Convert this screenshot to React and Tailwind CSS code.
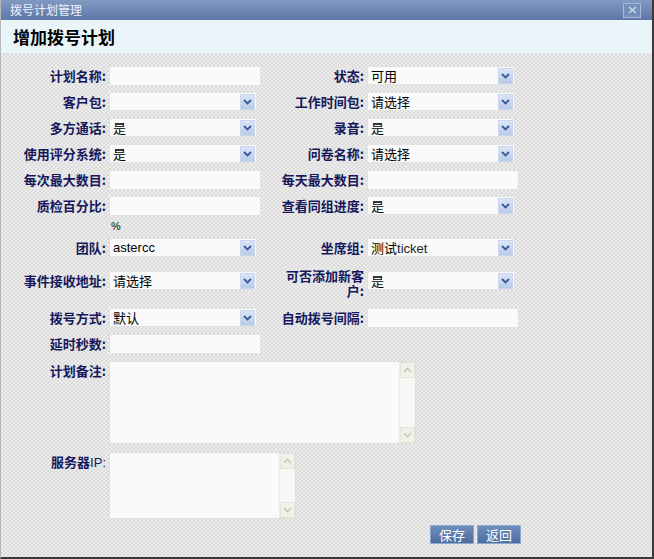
import React from "react";

const font = "font-['SimSun','Noto_Sans_CJK_SC',sans-serif]";

const Arrow = () => (
  <div className="w-[15px] h-[16px] mr-[1px] flex items-center justify-center bg-gradient-to-b from-[#dbe5f6] to-[#b9cbea] border border-[#c9d6ec]">
    <svg width="9" height="6" viewBox="0 0 9 6">
      <path d="M1 1 L4.5 4.5 L8 1" fill="none" stroke="#3b5a99" strokeWidth="1.8" />
    </svg>
  </div>
);

const Select = ({ value, w = "w-[148px]", latin }) => (
  <div className={`${w} h-[19px] bg-[#fafafa] border border-[#e2e2e2] flex items-center justify-between`}>
    <span className={`pl-[3px] text-[13px] leading-[17px] text-black ${latin ? "font-['Liberation_Sans',sans-serif] text-[#222]" : ""}`}>
      {value}
    </span>
    <Arrow />
  </div>
);

const Input = ({ w = "w-[152px]" }) => (
  <div className={`${w} h-[20px] bg-[#fafafa] border border-[#e2e2e2]`} />
);

const Label = ({ children, w = "w-[108px]", lh = "leading-[20px]", className = "" }) => (
  <div className={`${w} ${lh} shrink-0 text-right pr-[3px] text-[13px] font-bold text-[#15185c] ${className}`}>
    {children}
  </div>
);

const Scrollbar = () => (
  <div className="w-[16px] h-full flex flex-col justify-between border-l border-[#ececec] bg-[#f7f7f5]">
    <div className="h-[16px] flex items-center justify-center bg-[#f1f1ea] border border-[#e4e4da]">
      <svg width="9" height="6" viewBox="0 0 9 6">
        <path d="M1 5 L4.5 1.5 L8 5" fill="none" stroke="#c8c8bc" strokeWidth="1.6" />
      </svg>
    </div>
    <div className="h-[16px] flex items-center justify-center bg-[#f1f1ea] border border-[#e4e4da]">
      <svg width="9" height="6" viewBox="0 0 9 6">
        <path d="M1 1 L4.5 4.5 L8 1" fill="none" stroke="#c8c8bc" strokeWidth="1.6" />
      </svg>
    </div>
  </div>
);

const Row = ({ h, children }) => <div className={`flex items-start ${h}`}>{children}</div>;

export default function App() {
  return (
    <div className={`w-[654px] h-[559px] flex flex-col ${font} border-r-2 border-b-2 border-[#3a3a3a] border-l border-l-[#b8b8b8] overflow-hidden`}>
      {/* title bar */}
      <div className="h-[20px] shrink-0 flex items-center justify-between bg-gradient-to-b from-[#8299c2] to-[#5d78a8] pl-[9px] pr-[11px]">
        <span className="text-[12px] text-[#eef2fa] leading-none">拨号计划管理</span>
        <div className="w-[18px] h-[15px] border border-[#a9b9d8] bg-[#748dba] flex items-center justify-center">
          <svg width="9" height="8" viewBox="0 0 9 8">
            <path d="M1 1 L8 7 M8 1 L1 7" stroke="#d5def0" strokeWidth="1.3" />
          </svg>
        </div>
      </div>

      {/* header */}
      <div className="h-[34px] shrink-0 flex items-center bg-[#eaf5f9] border-b border-dotted border-[#d6d6d6] pl-[12px]">
        <span className="text-[17px] font-bold text-black">增加拨号计划</span>
      </div>

      {/* body */}
      <div className="flex-1 bg-[#e4e4e4] bg-[image:repeating-conic-gradient(#dbdbdb_0%_25%,#ededed_0%_50%)] bg-[length:4px_4px] pt-[12px]">
        <Row h="h-[26px]">
          <Label>计划名称:</Label>
          <Input />
          <Label w="w-[106px]">状态:</Label>
          <Select value="可用" />
        </Row>
        <Row h="h-[26px]">
          <Label>客户包:</Label>
          <Select value="" />
          <Label w="w-[110px]">工作时间包:</Label>
          <Select value="请选择" />
        </Row>
        <Row h="h-[26px]">
          <Label>多方通话:</Label>
          <Select value="是" />
          <Label w="w-[110px]">录音:</Label>
          <Select value="是" />
        </Row>
        <Row h="h-[26px]">
          <Label>使用评分系统:</Label>
          <Select value="是" />
          <Label w="w-[110px]">问卷名称:</Label>
          <Select value="请选择" />
        </Row>
        <Row h="h-[26px]">
          <Label>每次最大数目:</Label>
          <Input />
          <Label w="w-[106px]">每天最大数目:</Label>
          <Input />
        </Row>
        <Row h="h-[42px]">
          <Label>质检百分比:</Label>
          <div className="flex flex-col">
            <Input />
            <span className="pl-[2px] mt-[2px] text-[11px] font-bold text-[#445a44] font-['Liberation_Sans',sans-serif]">%</span>
          </div>
          <Label w="w-[106px]">查看同组进度:</Label>
          <Select value="是" />
        </Row>
        <Row h="h-[33px]">
          <Label>团队:</Label>
          <Select value="astercc" latin />
          <Label w="w-[110px]">坐席组:</Label>
          <Select
            value={
              <>
                测试<span className="font-['Liberation_Sans',sans-serif] text-[#222]">ticket</span>
              </>
            }
          />
        </Row>
        <Row h="h-[37px]">
          <Label>事件接收地址:</Label>
          <Select value="请选择" />
          <div className="w-[20px] shrink-0" />
          <Label w="w-[90px]" lh="leading-[15px]" className="-mt-[3px]">可否添加新客户:</Label>
          <Select value="是" />
        </Row>
        <Row h="h-[26px]">
          <Label>拨号方式:</Label>
          <Select value="默认" />
          <Label w="w-[110px]">自动拨号间隔:</Label>
          <Input />
        </Row>
        <Row h="h-[27px]">
          <Label>延时秒数:</Label>
          <Input />
        </Row>
        <Row h="h-[91px]">
          <Label>计划备注:</Label>
          <div className="w-[307px] h-[83px] bg-[#fafafa] border border-[#dedede] flex justify-end">
            <Scrollbar />
          </div>
        </Row>
        <Row h="h-[73px]">
          <Label>
            服务器<span className="font-['Liberation_Sans',sans-serif] font-normal">IP:</span>
          </Label>
          <div className="w-[187px] h-[67px] bg-[#fafafa] border border-[#dedede] flex justify-end">
            <Scrollbar />
          </div>
        </Row>
        <div className="flex gap-[3px] pl-[429px]">
          {["保存", "返回"].map((t) => (
            <div
              key={t}
              className="w-[44px] h-[19px] flex items-center justify-center bg-gradient-to-b from-[#6f8dbe] to-[#4d6c9f] border border-[#8fa7cf] text-[13px] text-white leading-none"
            >
              {t}
            </div>
          ))}
        </div>
      </div>
    </div>
  );
}
